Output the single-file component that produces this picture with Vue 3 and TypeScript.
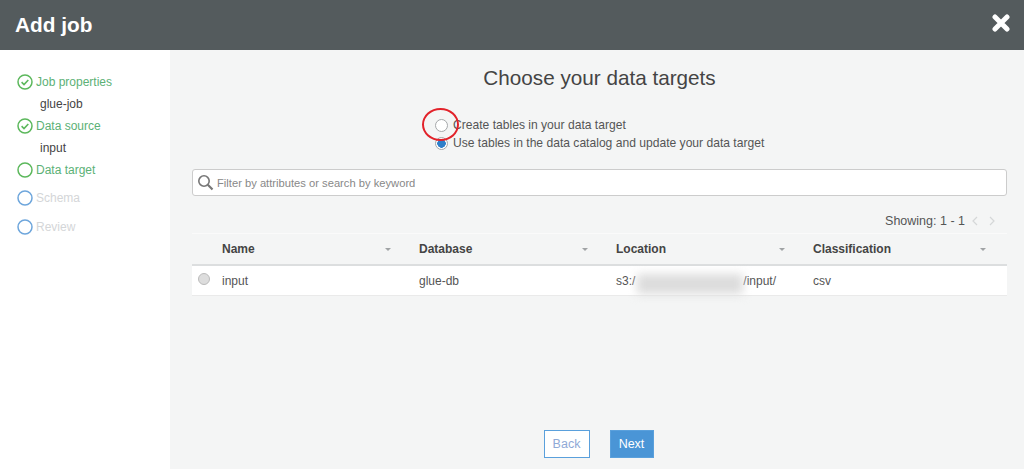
<script setup lang="ts">
interface Step { label: string; state: 'done' | 'active' | 'todo'; sub?: string }
const steps: Step[] = [
  { label: 'Job properties', state: 'done', sub: 'glue-job' },
  { label: 'Data source', state: 'done', sub: 'input' },
  { label: 'Data target', state: 'active' },
  { label: 'Schema', state: 'todo' },
  { label: 'Review', state: 'todo' },
]
const cols = ['Name', 'Database', 'Location', 'Classification']
</script>

<template>
  <div class="page">
    <header class="top">
      <h1>Add job</h1>
      <svg class="close" width="18" height="18" viewBox="0 0 18 18"><path d="M3 3l12 12M15 3L3 15" stroke="#fff" stroke-width="5" stroke-linecap="round"/></svg>
    </header>
    <div class="body">
      <aside class="side">
        <div v-for="s in steps" :key="s.label" class="step" :class="s.state">
          <div class="step-row">
            <svg width="16" height="16" viewBox="0 0 16 16">
              <circle cx="8" cy="8" r="7" fill="none" :stroke="s.state === 'todo' ? '#6ea6dc' : '#5cb85c'" stroke-width="1.5"/>
              <path v-if="s.state === 'done'" d="M4.6 8.2l2.4 2.3 4.3-4.5" fill="none" stroke="#5cb85c" stroke-width="1.6"/>
            </svg>
            <span>{{ s.label }}</span>
          </div>
          <div v-if="s.sub" class="sub">{{ s.sub }}</div>
        </div>
      </aside>
      <main class="main">
        <h2>Choose your data targets</h2>
        <div class="options">
          <label class="opt"><span class="radio"></span>Create tables in your data target</label>
          <label class="opt"><span class="radio on"></span>Use tables in the data catalog and update your data target</label>
          <span class="ring"></span>
        </div>
        <div class="filter">
          <svg width="17" height="17" viewBox="0 0 17 17"><circle cx="7" cy="7" r="5.2" fill="none" stroke="#777" stroke-width="1.6"/><path d="M10.8 10.8l4.7 4.7" stroke="#777" stroke-width="2.2"/></svg>
          <span>Filter by attributes or search by keyword</span>
        </div>
        <div class="pager">
          <span>Showing: 1 - 1</span>
          <svg width="8" height="10" viewBox="0 0 8 10"><path d="M6 1L2 5l4 4" fill="none" stroke="#d5d7d8" stroke-width="1.2"/></svg>
          <svg width="8" height="10" viewBox="0 0 8 10"><path d="M2 1l4 4-4 4" fill="none" stroke="#d5d7d8" stroke-width="1.2"/></svg>
        </div>
        <div class="table">
          <div class="thead">
            <div v-for="c in cols" :key="c" class="th"><span>{{ c }}</span><i class="caret"></i></div>
          </div>
          <div class="trow">
            <span class="row-radio"></span>
            <div class="td">input</div>
            <div class="td">glue-db</div>
            <div class="td loc">s3:/<span class="gap"></span>/input/<span class="blur"></span></div>
            <div class="td">csv</div>
          </div>
        </div>
        <div class="actions">
          <button class="btn back">Back</button>
          <button class="btn next">Next</button>
        </div>
      </main>
    </div>
  </div>
</template>

<style>
html, body { margin: 0; }
</style>

<style scoped>
.page { width: 1024px; height: 469px; display: flex; flex-direction: column; overflow: hidden; font-family: "Liberation Sans", Arial, sans-serif; color: #444; font-size: 12px; }
.top { height: 50px; flex: none; background: #545b5d; display: flex; align-items: center; justify-content: space-between; padding: 0 14px 0 15px; color: #fff; }
.top h1 { margin: 0; font-size: 20.8px; font-weight: 700; }
.close { margin-top: -4px; }
.body { flex: 1; display: flex; min-height: 0; }
.side { width: 170px; flex: none; background: #fff; padding-top: 23.5px; box-sizing: border-box; }
.step-row { display: flex; align-items: center; gap: 3px; padding-left: 17px; height: 16px; }
.step { margin-bottom: 12.5px; }
.done.step, .active.step { color: #5cb176; }
.todo.step { color: #d4d6d8; }
.sub { color: #444; padding-left: 40px; margin-top: 6px; line-height: 16px; margin-bottom: -6.5px; }
.main { flex: 1; background: #f4f5f5; padding: 16px 17px 0 22px; display: flex; flex-direction: column; min-width: 0; }
.main h2 { margin: 0; text-align: center; font-size: 20.7px; font-weight: 400; color: #444; line-height: 24px; }
.options { position: relative; margin: 28px 0 0 243px; display: flex; flex-direction: column; gap: 3px; width: 360px; }
.opt { display: flex; align-items: center; height: 15px; line-height: 15px; color: #555; font-size: 12.1px; }
.radio { width: 13px; height: 13px; box-sizing: border-box; border-radius: 50%; border: 1px solid #a5a8aa; background: #fff; margin-right: 5px; flex: none; }
.radio.on { background: radial-gradient(circle, #2f7fc9 0 4px, #fff 4.5px); }
.ring { position: absolute; left: -13px; top: -10px; width: 33px; height: 29px; border: 2px solid #e2222a; border-radius: 50%; }
.filter { margin-top: 18px; height: 27px; box-sizing: border-box; border: 1px solid #ccc; border-radius: 3px; background: #fff; display: flex; align-items: center; gap: 3px; padding-left: 4px; font-size: 11.2px; color: #888; }
.pager { display: flex; align-items: center; justify-content: flex-end; gap: 9px; margin-top: 17px; height: 15px; padding-right: 11px; color: #555; font-size: 12.5px; }
.pager span { margin-right: -3px; }
.table { margin-top: 5px; }
.thead, .trow { display: grid; grid-template-columns: 197px 197px 197px 1fr; padding-left: 30px; }
.thead { height: 30px; border-top: 1px solid #fafafa; border-bottom: 2px solid #dcdedf; box-sizing: content-box; background: #f4f5f5; }
.th { display: flex; align-items: center; justify-content: space-between; font-weight: 700; color: #444; padding-right: 28px; }
.th:last-child { padding-right: 21px; }
.caret { width: 0; height: 0; border-left: 3.5px solid transparent; border-right: 3.5px solid transparent; border-top: 3.5px solid #a0a3a5; }
.trow { position: relative; height: 29px; background: #fff; border-bottom: 1px solid #eaeaea; align-items: center; color: #555; }
.row-radio { position: absolute; left: 6px; top: 7px; width: 10px; height: 10px; border-radius: 50%; background: #ddd; border: 1px solid #bbb; }
.loc { position: relative; display: flex; }
.gap { width: 108px; flex: none; }
.blur { position: absolute; left: 21px; top: 0; width: 106px; height: 20px; background: #dcdcdc; filter: blur(5px); }
.actions { margin-top: 134px; display: flex; justify-content: center; gap: 20px; padding-right: 2px; }
.btn { height: 28px; box-sizing: border-box; font: 12.5px "Liberation Sans", Arial, sans-serif; padding: 0; border: 1px solid #5aa0dc; }
.back { width: 46px; background: #fff; color: #8fa9d6; }
.next { width: 44px; background: #4a95d6; color: #fff; }
</style>
